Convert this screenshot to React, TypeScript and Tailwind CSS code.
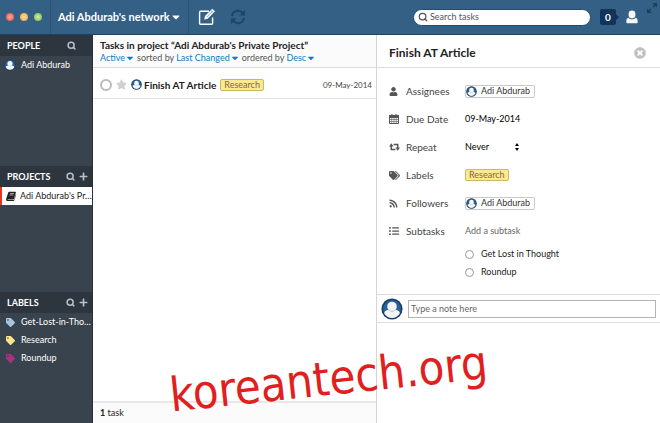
import type { ReactNode } from 'react'
import { FaCaretDown, FaListUl, FaPlus, FaRss, FaStar, FaTag, FaTags, FaTimesCircle, FaUser } from 'react-icons/fa'
import { LuSearch } from 'react-icons/lu'

const labels = [
  { name: 'Get-Lost-in-Tho…', color: 'text-[#a9c4dc]' },
  { name: 'Research', color: 'text-[#fbe68b]' },
  { name: 'Roundup', color: 'text-[#a8327f]' },
]

const subtasks = ['Get Lost in Thought', 'Roundup']

function Avatar({ className }: { className: string }) {
  return (
    <svg viewBox="0 0 24 24" className={`shrink-0 ${className}`} aria-hidden="true">
      <circle cx="12" cy="12" r="11.5" fill="#153f68" />
      <circle cx="12" cy="12" r="9.8" fill="#2a6294" />
      <path d="M3.4 16.6c.6-2.6 2.3-3.2 4.6-3.8a5.4 5.4 0 0 1-1.2-3.6 5.2 5.2 0 1 1 10.4 0c0 1.4-.4 2.6-1.2 3.6 2.3.6 4 1.2 4.6 3.8a9.8 9.8 0 0 1-17.2 0z" fill="#f4f4f4" />
      <path d="M8 12.8c2 2.2 6 2.2 8 0" fill="none" stroke="#b9c3cc" strokeWidth="1" />
    </svg>
  )
}

function ComposeIcon() {
  return (
    <svg viewBox="0 0 18 18" className="size-[18px]" fill="none" stroke="#fff" aria-hidden="true">
      <path d="M11 3.2H2.6a1 1 0 0 0-1 1v11a1 1 0 0 0 1 1h11a1 1 0 0 0 1-1V9.5" strokeWidth="1.4" />
      <path d="M6.5 11.3l.8-3.3 7-7 2.4 2.4-7 7z" fill="#fff" strokeWidth=".5" />
      <path d="M8.6 9.2l5.6-5.6M12.9 2.4l2.5 2.5" stroke="#346086" strokeWidth=".6" />
    </svg>
  )
}

function RefreshIcon() {
  return (
    <svg viewBox="0 0 16 16" className="size-4" fill="none" stroke="#1b4469" strokeWidth="1.9" aria-hidden="true">
      <path d="M2 7a6 6 0 0 1 10.8-2.8M14 9a6 6 0 0 1-10.8 2.8" />
      <path d="M15 1v5.5H9.5zM1 15V9.5h5.5z" fill="#1b4469" stroke="none" />
    </svg>
  )
}

function BookIcon() {
  return (
    <svg viewBox="0 0 12 12" className="size-[10px] shrink-0" aria-hidden="true">
      <path d="M4 .8h7.2c.5 0 .8.4.6 1L9.6 9.3c-.1.5-.5.8-1 .8H2.3c-.5 0-.5.8 0 .8h7.2l2.2-7c.4.2.4.5.3.9l-2 6.3c-.2.6-.6.9-1.1.9H1.8C.6 12-.2 10.8.1 9.7L2.7 1.8c.2-.6.7-1 1.3-1z" fill="#222" />
      <path d="M4.9 3h4.6M4.3 4.8h4.6" stroke="#fff" strokeWidth=".7" />
    </svg>
  )
}

function CalendarIcon() {
  return (
    <svg viewBox="0 0 10 10" className="size-[10px]" fill="none" stroke="currentColor" aria-hidden="true">
      <path d="M.5 1.5h9v2h-9z" fill="currentColor" />
      <path d="M.5 1.5h9v8h-9z" />
      <path d="M2.7 3.5v6M5 3.5v6M7.3 3.5v6M.5 5.5h9M.5 7.5h9" strokeWidth=".6" />
      <path d="M3 0v2.5M7 0v2.5" strokeWidth="1.2" />
    </svg>
  )
}

function RepeatIcon() {
  return (
    <svg viewBox="0 0 12 8" className="h-2 w-[11px]" fill="none" stroke="currentColor" strokeWidth="1.6" aria-hidden="true">
      <path d="M2.5 2.5v4.3H7M5 1.2h4.5v4.3" />
      <path d="M0 3.4L2.5 0 5 3.4zM7 4.6h5L9.5 8z" fill="currentColor" stroke="none" />
    </svg>
  )
}

function SectionHeader({ title, canAdd }: { title: string; canAdd?: boolean }) {
  return (
    <div className="flex h-[21px] items-center bg-[#2d363f] pl-[7px] pr-1 text-[#b8bfc6]">
      <h2 className="flex-1 font-bold text-white">{title}</h2>
      <button type="button" aria-label={`Search ${title.toLowerCase()}`} className={canAdd ? 'mr-1' : 'mr-3'}>
        <LuSearch className="size-[9px]" strokeWidth={4} />
      </button>
      {canAdd && (
        <button type="button" aria-label={`Add to ${title.toLowerCase()}`}>
          <FaPlus className="size-[9px]" />
        </button>
      )}
    </div>
  )
}

function SortLink({ children }: { children: ReactNode }) {
  return (
    <button type="button" className="flex items-center text-[#0b7dc4]">
      {children}
      <FaCaretDown className="size-[10px]" />
    </button>
  )
}

function Chip() {
  return (
    <span className="flex h-[13px] items-center gap-1 rounded-[2px] border border-[#c9c9c9] pr-1 text-[#333]">
      <Avatar className="size-[11px]" />
      Adi Abdurab
    </span>
  )
}

function Research() {
  return (
    <span className="flex h-3 items-center rounded-[2px] border border-[#cdb765] bg-[#fde992] px-[3px] text-[#826840]">
      Research
    </span>
  )
}

function Field({ icon, label, children }: { icon: ReactNode; label: string; children: ReactNode }) {
  return (
    <div className="flex h-[28px] items-center">
      <span className="flex w-[17px] text-[#555]">{icon}</span>
      <span className="w-[59px] text-[10px] leading-3 text-[#444]">{label}</span>
      {children}
    </div>
  )
}

export default function App() {
  return (
    <div className="flex min-h-screen flex-col overflow-hidden bg-white font-['Lato',sans-serif] text-[9px] leading-3 text-[#222]">
      {/* Title bar */}
      <header className="flex h-[35px] items-center border-b border-[#1c4364] bg-[#346086]">
        <div className="flex h-full w-[51px] items-center gap-1.5 border-r border-[#2a5377] pl-[6px]">
          <span className="size-2 rounded-full bg-radial from-[#ffb0a0] to-[#e0382e]" />
          <span className="size-2 rounded-full bg-radial from-[#ffe09a] to-[#e99a2a]" />
          <span className="size-2 rounded-full bg-radial from-[#d5f3a5] to-[#6fae3d]" />
        </div>
        <button type="button" className="flex h-full w-[138px] items-center border-r border-[#2a5377] pl-[7px] text-[11px] font-bold whitespace-nowrap text-white">
          Adi Abdurab's network
          <FaCaretDown className="size-3 shrink-0" />
        </button>
        <button type="button" aria-label="New task" className="ml-[9px]"><ComposeIcon /></button>
        <button type="button" aria-label="Refresh" className="ml-[14px]"><RefreshIcon /></button>
        <label className="ml-auto flex h-[17px] w-[178px] items-center gap-0.5 rounded-full border border-[#214b70] bg-white pl-1 text-[#555]">
          <LuSearch className="size-[10px] shrink-0" strokeWidth={3} />
          <input aria-label="Search tasks" placeholder="Search tasks" className="w-full min-w-0 bg-transparent outline-none placeholder:text-[#555]" />
        </label>
        <button type="button" className="ml-[9px] flex items-center text-[10px] font-bold text-white" aria-label="0 notifications">
          <span className="flex size-4 items-center justify-center rounded-[2px] bg-[#12345a]">0</span>
          <svg viewBox="0 0 3 6" className="h-1.5 w-[3px]" aria-hidden="true"><path d="M0 0l3 3-3 3z" fill="#12345a" /></svg>
        </button>
        <button type="button" aria-label="Account" className="ml-[7px]">
          <svg viewBox="0 0 12 14" className="h-[14px] w-3" fill="#f5f5f5" aria-hidden="true">
            <rect x="2.6" y=".5" width="6.8" height="7.8" rx="3.4" />
            <path d="M2.3 7.8c1.8 2 5.6 2 7.4 0 1.5.4 2 1.6 2 4.2 0 1-.4 1.3-1.4 1.3H1.7C.7 13.3.3 13 .3 12c0-2.6.5-3.8 2-4.2z" />
          </svg>
        </button>
        <button type="button" aria-label="Full screen" className="ml-[9px] mr-[3px] self-start pt-[3px]">
          <svg viewBox="0 0 10 10" className="size-[10px]" fill="#1b3e5d" stroke="#1b3e5d" aria-hidden="true">
            <path d="M5.5 0H10v4.5zM0 5.5V10h4.5z" stroke="none" />
            <path d="M8.5 1.5L6 4M1.5 8.5L4 6" strokeWidth="1.5" />
          </svg>
        </button>
      </header>

      <div className="flex flex-1">
        {/* Sidebar */}
        <nav className="w-[93px] shrink-0 border-r border-[#27303a] bg-[#39434d] text-white">
          <section className="min-h-[131px]">
            <SectionHeader title="PEOPLE" />
            <a href="#adi" className="flex h-[18px] items-center gap-[5px] pl-1">
              <Avatar className="size-3" />
              Adi Abdurab
            </a>
          </section>
          <section className="min-h-[126px]">
            <SectionHeader title="PROJECTS" canAdd />
            <a href="#project" className="flex h-[18px] items-center gap-1 border-l-2 border-[#e8361c] bg-white pl-1 whitespace-nowrap text-[#222]">
              <BookIcon />
              Adi Abdurab's Pr…
            </a>
          </section>
          <section>
            <SectionHeader title="LABELS" canAdd />
            {labels.map(l => (
              <a key={l.name} href={`#${l.name}`} className="flex h-[18px] items-center gap-[6px] pl-[6px] whitespace-nowrap">
                <FaTag className={`size-[9px] shrink-0 ${l.color}`} />
                {l.name}
              </a>
            ))}
          </section>
        </nav>

        {/* Task list */}
        <main className="flex min-w-0 flex-1 flex-col">
          <div className="h-[33px] border-b border-[#ddd] bg-[#fbfbfb] pl-[7px] pt-1">
            <h1 className="text-[10px] leading-3 font-bold">Tasks in project “Adi Abdurab's Private Project”</h1>
            <div className="mt-px flex gap-0.5 text-[#555]">
              <SortLink>Active</SortLink> sorted by <SortLink>Last Changed</SortLink> ordered by <SortLink>Desc</SortLink>
            </div>
          </div>
          <div className="flex h-[31px] items-center border-b border-[#e2e2e2] pl-[7px] pr-1 pt-[3px]">
            <input type="checkbox" aria-label="Finish AT Article" className="size-3 appearance-none rounded-full border-2 border-[#bbb]" />
            <FaStar className="ml-1 size-[11px] text-[#d0d0d0]" />
            <Avatar className="ml-1 size-[11px]" />
            <span className="ml-0.5 mr-1 text-[10px] leading-3 font-bold">Finish AT Article</span>
            <Research />
            <span className="ml-auto text-[8px] text-[#444]">09-May-2014</span>
          </div>
          <footer className="mt-auto h-[22px] border-t-2 border-[#e8e8e8] bg-[#fbfbfb] pl-[7px] pt-1"><b>1</b> task</footer>
        </main>

        {/* Task details */}
        <aside className="min-w-0 flex-1 border-l border-[#d5d5d5]">
          <div className="flex h-[33px] items-center justify-between border-b border-[#ddd] pl-3 pr-[14px] pt-1">
            <h2 className="text-xs font-bold">Finish AT Article</h2>
            <button type="button" aria-label="Close"><FaTimesCircle className="size-3 text-[#c0c0c0]" /></button>
          </div>
          <div className="h-[226px] pl-3 pt-[9px]">
            <Field icon={<FaUser className="size-[9px]" />} label="Assignees"><Chip /></Field>
            <Field icon={<CalendarIcon />} label="Due Date"><span className="text-black">09-May-2014</span></Field>
            <Field icon={<RepeatIcon />} label="Repeat">
              <label className="flex items-center text-black">
                <select aria-label="Repeat" className="w-[50px] appearance-none bg-transparent">
                  <option>Never</option>
                </select>
                <svg viewBox="0 0 4 10" className="h-[10px] w-1" aria-hidden="true"><path d="M0 4l2-3 2 3zM0 6h4L2 9z" /></svg>
              </label>
            </Field>
            <Field icon={<FaTags className="size-[11px]" />} label="Labels"><Research /></Field>
            <Field icon={<FaRss className="size-[9px]" />} label="Followers"><Chip /></Field>
            <Field icon={<FaListUl className="size-[10px]" />} label="Subtasks">
              <input aria-label="Add a subtask" placeholder="Add a subtask" className="min-w-0 flex-1 placeholder:text-[#666]" />
            </Field>
            {subtasks.map(s => (
              <label key={s} className="ml-[76px] flex h-[18px] items-center gap-[7px]">
                <input type="checkbox" className="size-[9px] appearance-none rounded-full border border-[#999]" />
                {s}
              </label>
            ))}
          </div>
          <div className="flex h-[29px] items-center gap-[5px] border-y border-[#ddd] px-1">
            <Avatar className="size-[22px]" />
            <input aria-label="Note" placeholder="Type a note here" className="h-[18px] min-w-0 flex-1 border border-[#b5b5b5] pl-0.5 placeholder:text-[#666]" />
          </div>
        </aside>
      </div>

      <div className="pointer-events-none absolute left-[169px] top-[352px] origin-center -rotate-6 text-[47px] leading-[54px] text-[#e01f1f] font-['DejaVu_Sans_Condensed','DejaVu_Sans',sans-serif]">
        koreantech.org
      </div>
    </div>
  )
}
